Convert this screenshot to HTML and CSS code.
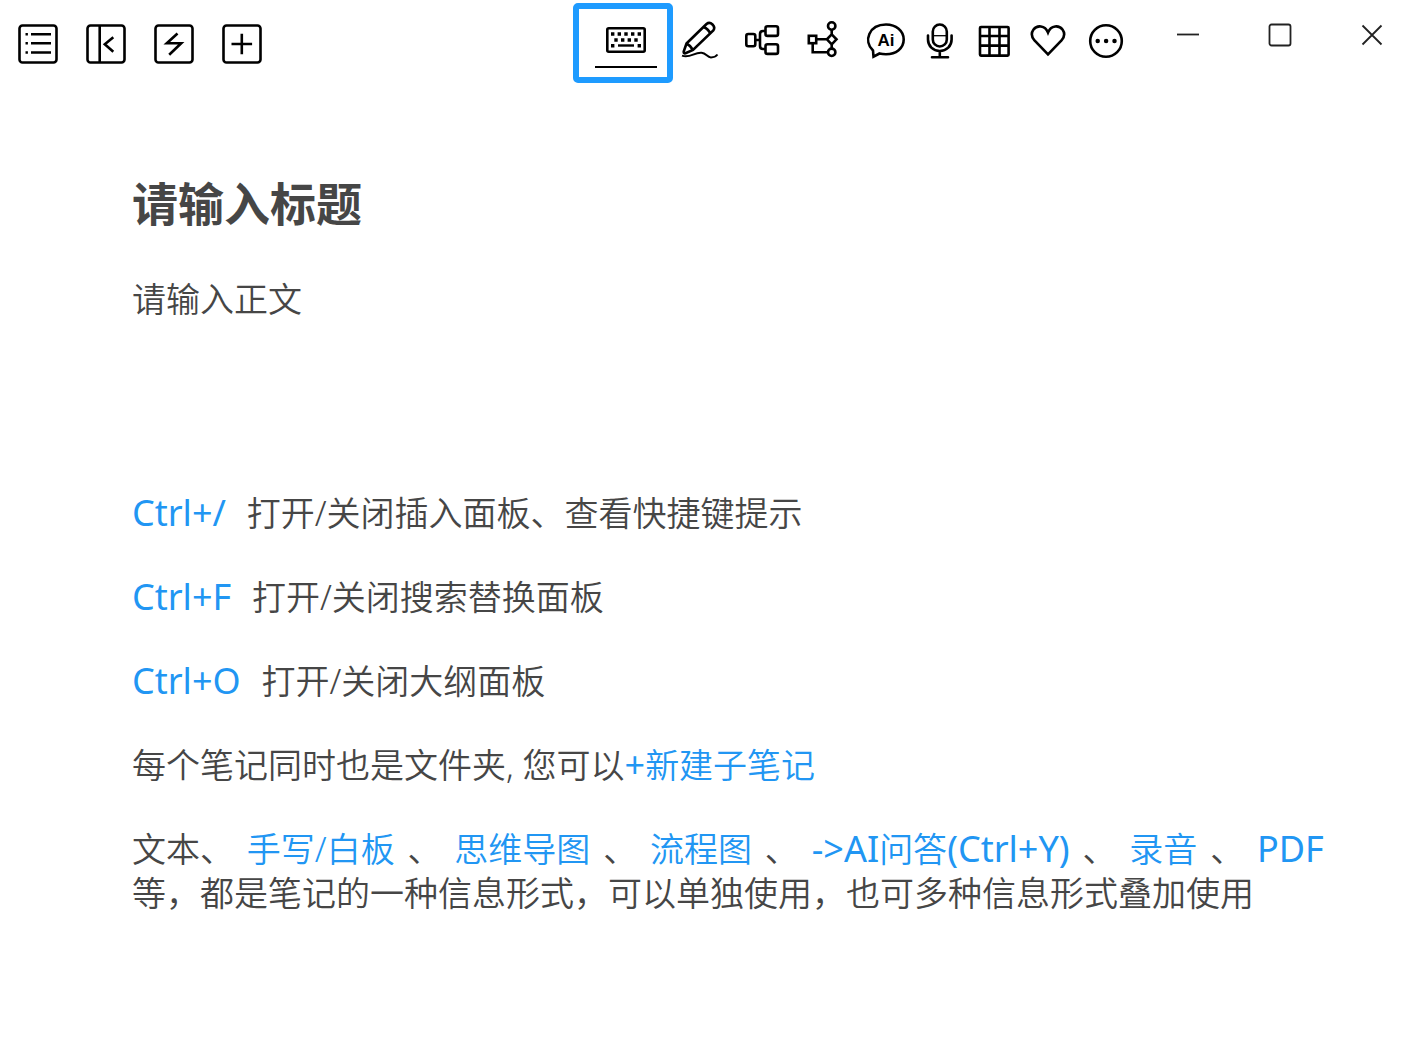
FILE: index.html
```html
<!DOCTYPE html>
<html lang="zh-CN">
<head>
    <meta charset="UTF-8">
    <meta name="viewport" content="width=device-width, initial-scale=1.0">
    <title>笔记</title>
    <link rel="stylesheet" href="styles.css">
</head>
<body>
    <header class="topbar">
        <nav class="nav-tools">
            <button type="button" aria-label="列表">
                <svg width="40" height="42" viewBox="0 0 40 42">
                    <rect x="1.5" y="3.5" width="37" height="37" rx="3"/>
                    <path d="M13 12.3h20M13 21.3h20M13 30.5h20M7.5 12.3h2.4M7.5 21.3h2.4M7.5 30.5h2.4"/>
                </svg>
            </button>
            <button type="button" aria-label="收起侧栏">
                <svg width="40" height="42" viewBox="0 0 40 42">
                    <rect x="1.5" y="3.5" width="37" height="37" rx="3"/>
                    <path d="M13.7 3.5v37M27.3 15.3l-8.5 7 8.5 7.4"/>
                </svg>
            </button>
            <button type="button" aria-label="快速笔记">
                <svg width="40" height="42" viewBox="0 0 40 42">
                    <rect x="1.5" y="3.5" width="37" height="37" rx="3"/>
                    <path d="M23.5 11.5L12.8 21.3H27.2L15.2 32.8"/>
                </svg>
            </button>
            <button type="button" aria-label="新建">
                <svg width="40" height="42" viewBox="0 0 40 42">
                    <rect x="1.5" y="3.5" width="37" height="37" rx="3"/>
                    <path d="M19.8 11.7v20.6M9.5 22h20.6"/>
                </svg>
            </button>
        </nav>

        <button type="button" class="mode-active" aria-label="键盘输入">
            <svg width="88" height="68" viewBox="0 0 88 68">
                <rect x="28.3" y="19.3" width="37.4" height="23.4" rx="1.5"/>
                <path class="keys" d="M32 25h3.4M38.6 25h3.4M45.3 25h3.4M52 25h3.4M58.6 25h3.4M35.3 31h3.4M42 31h3.4M48.6 31h3.4M55.3 31h3.4M32 36.7h3.4M58.6 36.7h3.4"/>
                <path d="M39 36.5h16" stroke-width="2.4"/>
                <path d="M16 58h62" stroke-width="2"/>
            </svg>
        </button>

        <div class="mode-tools">
            <button type="button" aria-label="手写">
                <svg width="42" height="50" viewBox="0 0 42 50">
                    <path d="M7.5 25.5L27.5 6q3-2.5 6 .5t.8 6L14 32l-7.5 3.3q-2 .4-1.8-1.800zM7.500 25.500q4 2 6.500 6.500M24.500 9q5 2 7 7"/>
                    <path d="M3 37.600c8 3 12-3.500 19.500-2.900 5 .5 5.500 4.800 9.500 4.700 3 0 5-1 6.500-2.900" stroke-width="2"/>
                </svg>
            </button>
            <button type="button" aria-label="思维导图">
                <svg width="46" height="50" viewBox="0 0 46 50">
                    <rect x="7.300" y="16" width="9" height="12.300" rx="2"/>
                    <rect x="26.500" y="8.300" width="12.500" height="9.600" rx="2"/>
                    <rect x="26.500" y="26.300" width="12.500" height="9.600" rx="2"/>
                    <path d="M16.300 22H21M26.500 13H24q-3 0-3 3v12q0 3 3 3h2.500"/>
                </svg>
            </button>
            <button type="button" aria-label="流程图">
                <svg width="43" height="50" viewBox="0 0 43 50">
                    <rect x="5.800" y="17.800" width="7.400" height="7.400"/>
                    <circle cx="28.700" cy="8" r="3.700"/>
                    <circle cx="28.700" cy="34.300" r="3.700"/>
                    <path d="M28.700 16.300l4.800 5-4.800 5-4.800-5zM13.500 21.300h10.400M28.700 11.700v4.600M28.700 26.300v4.300M9.700 25.500v8.800H25"/>
                </svg>
            </button>
            <button type="button" aria-label="AI问答">
                <svg width="44" height="50" viewBox="0 0 44 50">
                    <path d="M9 32.500C-1 23 5 6.500 22 6.500c10 0 17.700 6.200 17.700 15S32 36.200 22 36.200q-3.500 0-6.500-.7L9.500 38.700z"/>
                    <text x="22" y="28" text-anchor="middle">Ai</text>
                </svg>
            </button>
            <button type="button" aria-label="录音">
                <svg width="28" height="50" viewBox="0 0 28 50">
                    <rect x="6.800" y="6.500" width="14" height="22" rx="7"/>
                    <path d="M2 17.500v4c0 6.500 5 11.500 11.800 11.500s11.800-5 11.800-11.500v-4M13.800 33v6M6 39.200h16" stroke-linecap="round"/>
                    <path d="M7 17.700h14" stroke-width="1.300"/>
                </svg>
            </button>
            <button type="button" aria-label="表格">
                <svg width="40" height="50" viewBox="0 0 40 50">
                    <rect x="8" y="9" width="28.600" height="28.600" rx="1"/>
                    <path d="M17.500 9v28.600M27.500 9v28.600M8 18h28.600M8 27.600h28.600"/>
                </svg>
            </button>
            <button type="button" aria-label="收藏">
                <svg width="36" height="50" viewBox="0 0 36 50">
                    <path d="M18 14.500C15 7 7 7 3.500 11.500 1 15 1.500 19 4.500 22.500L18 36.500l13.500-14c3-3.500 3.500-7.500 1-11C29 7 21 7 18 14.500z"/>
                </svg>
            </button>
            <button type="button" aria-label="更多">
                <svg width="42" height="50" viewBox="0 0 42 50">
                    <circle cx="22" cy="23" r="15.800"/>
                    <path d="M13.700 23h.01M22.100 23h.01M30.500 23h.01" stroke-width="4.500" stroke-linecap="round"/>
                </svg>
            </button>
        </div>

        <div class="window-tools">
            <button type="button" aria-label="最小化">
                <svg width="24" height="24" viewBox="0 0 24 24"><path d="M1 11.500h22"/></svg>
            </button>
            <button type="button" aria-label="最大化">
                <svg width="24" height="24" viewBox="0 0 24 24"><rect x="1.500" y="1.500" width="21" height="21" rx="2"/></svg>
            </button>
            <button type="button" aria-label="关闭">
                <svg width="24" height="24" viewBox="0 0 24 24"><path d="M2.500 2.500l19 19M21.500 2.500l-19 19"/></svg>
            </button>
        </div>
    </header>

    <main class="note">
        <input class="note-title" type="text" aria-label="标题" placeholder="请输入标题">
        <textarea class="note-body" aria-label="正文" placeholder="请输入正文"></textarea>

        <section class="tips">
            <p><a href="#" class="latin shortcut">Ctrl+/</a> 打开/关闭插入面板、查看快捷键提示</p>
            <p><a href="#" class="latin shortcut">Ctrl+F</a> 打开/关闭搜索替换面板</p>
            <p><a href="#" class="latin shortcut">Ctrl+O</a> 打开/关闭大纲面板</p>
            <p>每个笔记同时也是文件夹, 您可以<a href="#"><span class="latin">+</span>新建子笔记</a></p>
            <p class="formats">文本、 <a href="#">手写/白板</a> 、 <a href="#">思维导图</a> 、 <a href="#">流程图</a> 、 <a href="#"><span class="latin">-&gt;AI</span>问答<span class="latin">(Ctrl+Y)</span></a> 、 <a href="#">录音</a> 、 <a href="#" class="latin">PDF</a> 等，都是笔记的一种信息形式，可以单独使用，也可多种信息形式叠加使用</p>
        </section>
    </main>
</body>
</html>
```
FILE: styles.css
```css
* {
    box-sizing: border-box;
}
body {
    margin: 0;
    background: #fff;
    color: #464646;
    font-family: "Noto Sans", "Noto Sans CJK SC", sans-serif;
    font-size: 34px;
    line-height: 44px;
}
button {
    display: flex;
    align-items: center;
    justify-content: center;
    padding: 0;
    border: none;
    background: none;
    color: #000;
    cursor: pointer;
}
svg {
    display: block;
    fill: none;
    stroke: currentColor;
    stroke-width: 2.6;
}
svg text {
    fill: currentColor;
    stroke: none;
    font-size: 17px;
    font-weight: 600;
}

/* top bar */
.topbar {
    display: flex;
    align-items: center;
    height: 86px;
    padding-left: 18px;
}
.nav-tools {
    display: flex;
    gap: 28px;
}
.mode-active {
    margin-left: auto;
    margin-right: 6px;
    border: 6px solid #1e9bff;
    border-radius: 5px;
}
.keys {
    stroke-width: 3.4;
}
.mode-tools {
    display: flex;
    gap: 18px;
    margin-right: 19px;
}
.window-tools {
    display: flex;
    align-self: flex-start;
    gap: 6px;
}
.window-tools button {
    width: 86px;
    height: 70px;
    color: #222;
}
.window-tools svg {
    stroke-width: 1.8;
}

/* note */
.note {
    padding: 87px 70px 40px 132px;
}
.note-title,
.note-body {
    display: block;
    width: 100%;
    padding: 0;
    border: none;
    outline: none;
    background: none;
    color: inherit;
    font: inherit;
    resize: none;
}
.note-title {
    height: 60px;
    font-size: 46px;
    font-weight: 700;
}
.note-body {
    height: 168px;
    margin-top: 44px;
    font-weight: 350;
}
::placeholder {
    color: inherit;
    opacity: 1;
}
.tips {
    margin-top: 46px;
    font-weight: 350;
}
.tips p {
    margin: 0 0 40px;
}
.tips a {
    color: #2196f3;
    text-decoration: none;
}
.latin {
    font-size: 36px;
    font-weight: 400;
    line-height: 1;
}
.shortcut {
    margin-right: 12px;
}
.formats a {
    margin: 0 4px;
}
```
